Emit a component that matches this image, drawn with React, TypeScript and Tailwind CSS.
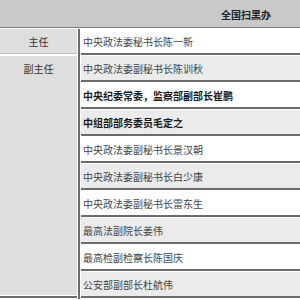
const rows = [
  { text: "中央政法委秘书长陈一新", bold: false },
  { text: "中央政法委副秘书长陈训秋", bold: false },
  { text: "中央纪委常委，监察部副部长崔鹏", bold: true },
  { text: "中组部部务委员毛定之", bold: true },
  { text: "中央政法委副秘书长景汉朝", bold: false },
  { text: "中央政法委副秘书长白少康", bold: false },
  { text: "中央政法委副秘书长雷东生", bold: false },
  { text: "最高法副院长姜伟", bold: false },
  { text: "最高检副检察长陈国庆", bold: false },
  { text: "公安部副部长杜航伟", bold: false },
]

export default function App() {
  return (
    <div
      className="w-[300px] h-[300px] overflow-hidden bg-white text-[10px] leading-none text-[#333]"
      style={{ fontFamily: '"Noto Sans CJK SC", "Noto Sans", sans-serif' }}
    >
      <div className="w-[420px]">
        {/* header */}
        <div className="flex h-[27px] bg-[#c9c9c9]">
          <div className="w-[81px] shrink-0" />
          <div className="w-[330px] flex items-center justify-center pt-[2px] font-bold text-[#222]">
            全国扫黑办
          </div>
        </div>
        <div className="h-px bg-[#7a7a7a]" />
        <div className="h-px bg-white" />

        <div className="flex">
          {/* left column */}
          <div className="w-[77px] shrink-0 flex flex-col bg-[#dedede]">
            <div className="h-[24px] flex items-center justify-center pt-[2px]">主任</div>
            <div className="h-px bg-[#bdbdbd]" />
            <div className="h-[2px] bg-white" />
            <div className="h-[24px] flex items-center justify-center pt-[2px]">副主任</div>
            <div className="flex-1" />
            <div className="h-px bg-white" />
            <div className="h-[2px] bg-[#6b6b6b]" />
            <div className="h-px bg-white" />
          </div>
          <div className="w-px bg-white" />
          <div className="w-[2px] bg-[#6b6b6b]" />
          <div className="w-px bg-white" />

          {/* right column */}
          <div className="w-[330px] flex flex-col">
            {rows.map((r, i) => (
              <div key={i} className="flex flex-col">
                <div
                  className={
                    "h-[24px] flex items-center pl-[2px] pt-[2px] " +
                    (i % 2 === 0 ? "bg-white" : "bg-[#ebebeb]") +
                    (r.bold ? " font-bold text-[#1a1a1a]" : " text-[#444]")
                  }
                >
                  {r.text}
                </div>
                <div className="h-[2px] bg-[#6b6b6b]" />
                <div className="h-px bg-white" />
              </div>
            ))}
          </div>
        </div>
      </div>
    </div>
  )
}
